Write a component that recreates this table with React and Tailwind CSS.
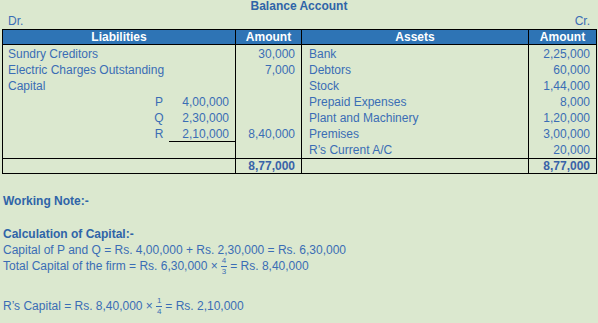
export default function App() {
  const liabilities = [
    { label: "Sundry Creditors", amount: "30,000" },
    { label: "Electric Charges Outstanding", amount: "7,000" },
    { label: "Capital", amount: "" },
    { partner: "P", sub: "4,00,000", amount: "" },
    { partner: "Q", sub: "2,30,000", amount: "" },
    { partner: "R", sub: "2,10,000", amount: "8,40,000", underline: true },
    { label: "", amount: "" },
  ]
  const assets = [
    { label: "Bank", amount: "2,25,000" },
    { label: "Debtors", amount: "60,000" },
    { label: "Stock", amount: "1,44,000" },
    { label: "Prepaid Expenses", amount: "8,000" },
    { label: "Plant and Machinery", amount: "1,20,000" },
    { label: "Premises", amount: "3,00,000" },
    { label: "R’s Current A/C", amount: "20,000" },
  ]

  const Fraction = ({ top, bottom }) => (
    <span className="inline-flex flex-col items-center mx-[3px] text-[8px] leading-[10px]">
      <span className="px-[1px] border-b border-[#3a6db5]">{top}</span>
      <span>{bottom}</span>
    </span>
  )

  return (
    <div
      className="w-[598px] h-[323px] bg-[#dbe8cf] text-[#3a6db5] text-[12px] leading-[16px] overflow-hidden"
      style={{ fontFamily: '"Liberation Sans", Arial, sans-serif' }}
    >
      <div className="h-[13px] leading-[13px] text-center font-bold text-[#2f64a8]">Balance Account</div>
      <div className="h-[16px] flex justify-between items-center px-[8px]">
        <span>Dr.</span>
        <span>Cr.</span>
      </div>

      <div className="ml-[2px] w-[595px] border border-black">
        {/* header */}
        <div className="grid grid-cols-[232px_1px_65px_1px_226px_1px_67px] bg-[#2e74b5] text-white font-bold h-[15px] leading-[15px] border-b border-black">
          <div className="text-center">Liabilities</div>
          <div className="bg-black" />
          <div className="text-center">Amount</div>
          <div className="bg-black" />
          <div className="text-center">Assets</div>
          <div className="bg-black" />
          <div className="text-center">Amount</div>
        </div>

        {/* body */}
        <div className="grid grid-cols-[232px_1px_65px_1px_226px_1px_67px]">
          <div className="flex flex-col pt-[1px]">
            {liabilities.map((row, i) => (
              <div key={i} className="h-[16px] flex items-center">
                {row.partner ? (
                  <div className="flex w-full justify-end h-[16px]">
                    <span className="w-[20px] text-center">{row.partner}</span>
                    <span
                      className={
                        "w-[66px] text-right pr-[6px] " + (row.underline ? "border-b border-black" : "")
                      }
                    >
                      {row.sub}
                    </span>
                  </div>
                ) : (
                  <span className="pl-[5px]">{row.label}</span>
                )}
              </div>
            ))}
          </div>
          <div className="bg-black" />
          <div className="flex flex-col pt-[1px]">
            {liabilities.map((row, i) => (
              <div key={i} className="h-[16px] text-right pr-[6px]">
                {row.amount}
              </div>
            ))}
          </div>
          <div className="bg-black" />
          <div className="flex flex-col pt-[1px]">
            {assets.map((row, i) => (
              <div key={i} className="h-[16px] pl-[7px]">
                {row.label}
              </div>
            ))}
          </div>
          <div className="bg-black" />
          <div className="flex flex-col pt-[1px]">
            {assets.map((row, i) => (
              <div key={i} className="h-[16px] text-right pr-[6px]">
                {row.amount}
              </div>
            ))}
          </div>
        </div>

        {/* total */}
        <div className="grid grid-cols-[232px_1px_65px_1px_226px_1px_67px] h-[15px] leading-[15px] border-t border-black font-bold text-[#3963a8]">
          <div />
          <div className="bg-black" />
          <div className="text-right pr-[6px]">8,77,000</div>
          <div className="bg-black" />
          <div />
          <div className="bg-black" />
          <div className="text-right pr-[6px]">8,77,000</div>
        </div>
      </div>

      <div className="pl-[3px]">
        <div className="mt-[19px] h-[16px] font-bold text-[#2f64a8]">Working Note:-</div>
        <div className="mt-[17px] h-[16px] font-bold text-[#2f64a8]">Calculation of Capital:-</div>
        <div className="h-[16px] whitespace-pre">Capital of P and Q = Rs. 4,00,000 + Rs. 2,30,000 = Rs. 6,30,000</div>
        <div className="h-[16px] flex items-center whitespace-pre">
          <span>Total Capital of the firm = Rs. 6,30,000 ×</span>
          <Fraction top="4" bottom="3" />
          <span>= Rs. 8,40,000</span>
        </div>
        <div className="mt-[24px] h-[16px] flex items-center whitespace-pre">
          <span>R’s Capital = Rs. 8,40,000 ×</span>
          <Fraction top="1" bottom="4" />
          <span>= Rs. 2,10,000</span>
        </div>
      </div>
    </div>
  )
}
